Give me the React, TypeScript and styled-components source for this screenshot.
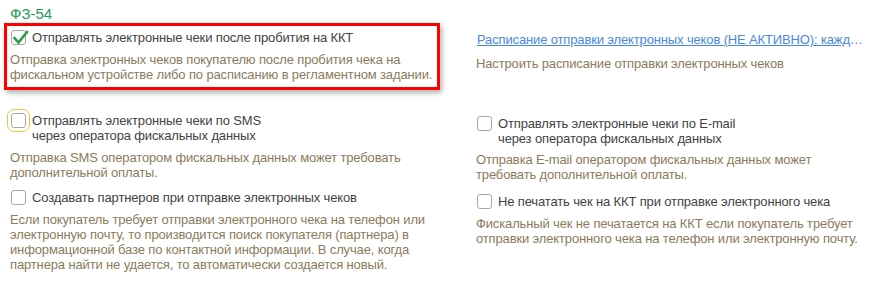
import React from "react";
import styled, { createGlobalStyle } from "styled-components";

const Global = createGlobalStyle`
  html, body { margin: 0; padding: 0; background: #ffffff; }
  body {
    font-family: "Liberation Sans", Arial, sans-serif;
    font-size: 13px;
    letter-spacing: -0.14px;
    color: #444444;
  }
`;

const Page = styled.div`
  width: 884px;
  height: 282px;
  overflow: hidden;
  box-sizing: border-box;
  padding-top: 5px;
`;

const Title = styled.div`
  padding-left: 10px;
  height: 18px;
  font-size: 15px;
  letter-spacing: 0;
  line-height: 18px;
  color: #1f9a5a;
`;

const Columns = styled.div`
  display: grid;
  grid-template-columns: 436px 394px;
  column-gap: 36px;
  padding-left: 4px;
  align-items: start;
`;

const Column = styled.div<{ $pad?: number }>`
  display: flex;
  flex-direction: column;
  padding-top: ${(p) => p.$pad ?? 0}px;
`;

const Highlight = styled.div`
  border: 3px solid #ff0000;
  padding: 4px 3px 5px;
  box-shadow: 2px 3px 5px rgba(0, 0, 0, 0.3);
`;

const Group = styled.div<{ $top: number; $indent?: number }>`
  margin-top: ${(p) => p.$top}px;
  padding-left: ${(p) => p.$indent ?? 0}px;
  display: flex;
  flex-direction: column;
`;

const Row = styled.div`
  display: flex;
  align-items: flex-start;
  gap: 6px;
`;

const Box = styled.span<{ $focused?: boolean }>`
  position: relative;
  flex: none;
  width: 15px;
  height: 15px;
  margin-left: 1px;
  box-sizing: border-box;
  border: 1px solid #a8a8a8;
  border-radius: 3px;
  background: #ffffff;
  outline: ${(p) => (p.$focused ? "1px solid #f2c53d" : "none")};
  outline-offset: 3px;
`;

const Check = styled.svg`
  position: absolute;
  left: -1px;
  top: -2px;
  width: 17px;
  height: 17px;
  overflow: visible;
`;

const Label = styled.span`
  line-height: 15px;
  white-space: nowrap;
  color: #434343;
`;

const Note = styled.div<{ $top: number }>`
  margin-top: ${(p) => p.$top}px;
  line-height: 15px;
  white-space: nowrap;
  color: #8b7b5b;
`;

const Link = styled.a`
  display: block;
  margin-left: 1px;
  line-height: 15px;
  color: #4a88e6;
  text-decoration: underline;
  white-space: nowrap;
  overflow: hidden;
  text-overflow: ellipsis;
  cursor: pointer;
`;

const Checkbox: React.FC<{ checked?: boolean; focused?: boolean }> = ({ checked, focused }) => (
  <Box $focused={focused}>
    {checked && (
      <Check viewBox="0 0 17 17">
        <path d="M3.5 9 L7.5 13.5 L16 3" fill="none" stroke="#2c9a4c" strokeWidth="2.6" strokeLinecap="square" />
      </Check>
    )}
  </Box>
);

export default function App() {
  return (
    <Page>
      <Global />
      <Title>ФЗ-54</Title>
      <Columns>
        <Column>
          <Highlight>
            <Row>
              <Checkbox checked />
              <Label>Отправлять электронные чеки после пробития на ККТ</Label>
            </Row>
            <Note $top={7}>
              Отправка электронных чеков покупателю после пробития чека на
              <br />
              фискальном устройстве либо по расписанию в регламентном задании.
            </Note>
          </Highlight>
          <Group $top={23} $indent={6}>
            <Row>
              <Checkbox focused />
              <Label>
                Отправлять электронные чеки по SMS
                <br />
                через оператора фискальных данных
              </Label>
            </Row>
            <Note $top={7}>
              Отправка SMS оператором фискальных данных может требовать
              <br />
              дополнительной оплаты.
            </Note>
          </Group>
          <Group $top={10} $indent={6}>
            <Row>
              <Checkbox />
              <Label>Создавать партнеров при отправке электронных чеков</Label>
            </Row>
            <Note $top={7}>
              Если покупатель требует отправки электронного чека на телефон или
              <br />
              электронную почту, то производится поиск покупателя (партнера) в
              <br />
              информационной базе по контактной информации. В случае, когда
              <br />
              партнера найти не удается, то автоматически создается новый.
            </Note>
          </Group>
        </Column>
        <Column $pad={9}>
          <Link>Расписание отправки электронных чеков (НЕ АКТИВНО): каждый день; с 0:00:00 один раз в день</Link>
          <Note $top={9}>Настроить расписание отправки электронных чеков</Note>
          <Group $top={45}>
            <Row>
              <Checkbox />
              <Label>
                Отправлять электронные чеки по E-mail
                <br />
                через оператора фискальных данных
              </Label>
            </Row>
            <Note $top={6}>
              Отправка E-mail оператором фискальных данных может
              <br />
              требовать дополнительной оплаты.
            </Note>
          </Group>
          <Group $top={12}>
            <Row>
              <Checkbox />
              <Label>Не печатать чек на ККТ при отправке электронного чека</Label>
            </Row>
            <Note $top={7}>
              Фискальный чек не печатается на ККТ если покупатель требует
              <br />
              отправки электронного чека на телефон или электронную почту.
            </Note>
          </Group>
        </Column>
      </Columns>
    </Page>
  );
}
